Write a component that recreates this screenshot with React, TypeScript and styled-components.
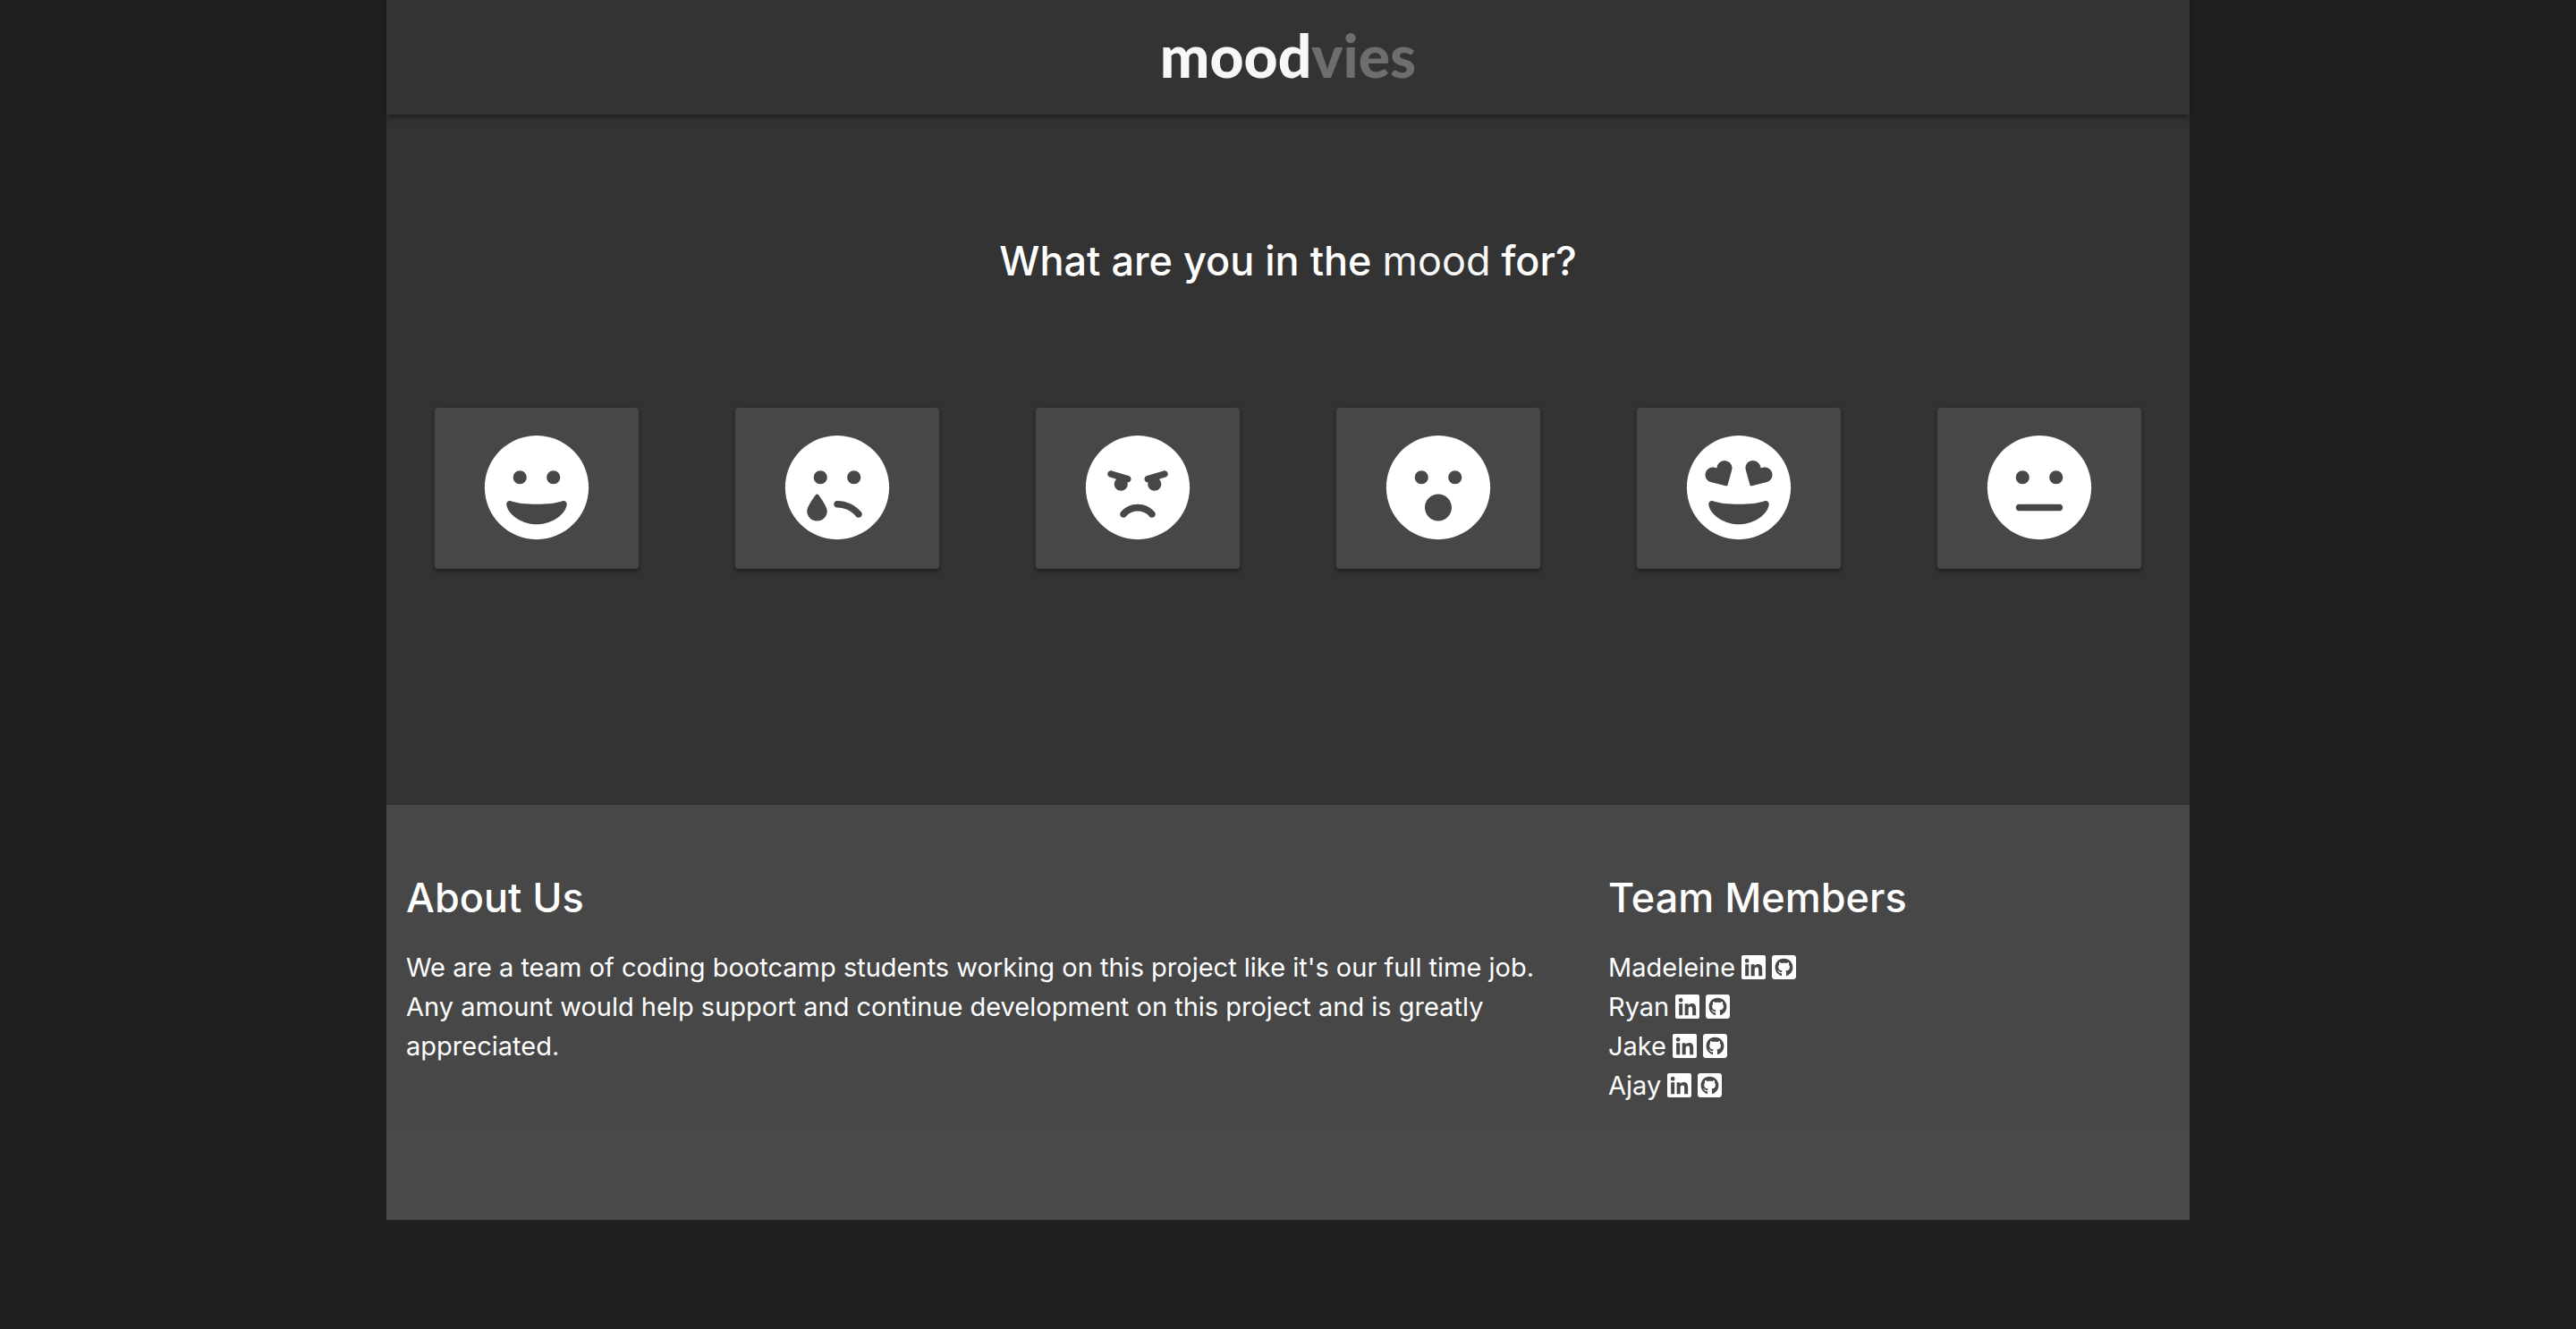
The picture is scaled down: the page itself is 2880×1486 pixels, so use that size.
import React from "react";
import styled, { createGlobalStyle } from "styled-components";
import type { IconType } from "react-icons";
import {
  FaAngry,
  FaGithubSquare,
  FaGrin,
  FaGrinHearts,
  FaLinkedin,
  FaMeh,
  FaSadTear,
  FaSurprise,
} from "react-icons/fa";

const GlobalStyle = createGlobalStyle`
  * { box-sizing: border-box; }
  body {
    margin: 0;
    background: #202020;
    color: #fff;
    font-family: Inter, "Liberation Sans", sans-serif;
    font-size: 29px;
    line-height: 44px;
  }
`;

const Page = styled.div`
  width: 70%;
  margin: 0 auto;
  background: #333;
`;

const Header = styled.header`
  display: flex;
  justify-content: center;
  height: 128px;
  box-shadow: 0 4px 4px rgba(0, 0, 0, 0.14), 0 6px 2px -4px rgba(0, 0, 0, 0.12),
    0 2px 10px rgba(0, 0, 0, 0.2);
`;

const Logo = styled.a`
  color: #f7f7f7;
  font-family: Lato, "Open Sans", sans-serif;
  font-size: 66px;
  font-weight: 900;
  line-height: 124px;
  text-decoration: none;
`;

const LogoTail = styled.span`
  color: #6e6e6e;
`;

const Main = styled.main`
  display: flex;
  flex-direction: column;
  gap: 134px;
  padding: 134px 0 264px;
`;

const Question = styled.h1`
  margin: 0;
  font-size: 45px;
  font-weight: 500;
  line-height: 60px;
  text-align: center;
`;

const Mood = styled.span`
  color: #f7f7f7;
  font-weight: 400;
`;

const MoodGrid = styled.div`
  display: grid;
  grid-template-columns: repeat(6, 1fr);
`;

const MoodButton = styled.button`
  display: flex;
  align-items: center;
  justify-content: center;
  height: 180px;
  margin: 0 54px;
  padding: 0 0 2px;
  border: 0;
  border-radius: 4px;
  background: #474747;
  color: #fff;
  font-size: 120px;
  cursor: pointer;
  box-shadow: 0 4px 4px rgba(0, 0, 0, 0.14), 0 6px 2px -4px rgba(0, 0, 0, 0.12),
    0 2px 10px rgba(0, 0, 0, 0.2);
`;

const Footer = styled.footer`
  background: #474747;
`;

const FooterColumns = styled.div`
  display: grid;
  grid-template-columns: 2fr 1fr;
  padding: 74px 0 28px;
`;

const FooterSection = styled.section`
  padding: 0 22px;
`;

const FooterTitle = styled.h2`
  margin: 0 0 26px;
  font-size: 45px;
  font-weight: 500;
  line-height: 60px;
`;

const FooterText = styled.p`
  margin: 0;
`;

const MemberList = styled.ul`
  margin: 0;
  padding: 0;
  list-style: none;
`;

const Member = styled.li`
  display: flex;
  align-items: center;
  gap: 7px;
`;

const SocialLink = styled.a`
  display: flex;
  width: 27px;
  justify-content: center;
  padding-bottom: 2px;
  color: #fff;
  font-size: 31px;
`;

const FooterBase = styled.div`
  height: 100px;
  background: #4a4a4a;
`;

const moods: { label: string; Icon: IconType }[] = [
  { label: "Happy", Icon: FaGrin },
  { label: "Sad", Icon: FaSadTear },
  { label: "Angry", Icon: FaAngry },
  { label: "Surprised", Icon: FaSurprise },
  { label: "In love", Icon: FaGrinHearts },
  { label: "Neutral", Icon: FaMeh },
];

const members = ["Madeleine", "Ryan", "Jake", "Ajay"];

export default function App() {
  return (
    <>
      <GlobalStyle />
      <Page>
        <Header>
          <Logo href="#">
            mood<LogoTail>vies</LogoTail>
          </Logo>
        </Header>
        <Main>
          <Question>
            What are you in the <Mood>mood</Mood> for?
          </Question>
          <MoodGrid>
            {moods.map(({ label, Icon }) => (
              <MoodButton key={label} type="button" aria-label={label}>
                <Icon />
              </MoodButton>
            ))}
          </MoodGrid>
        </Main>
        <Footer>
          <FooterColumns>
            <FooterSection>
              <FooterTitle>About Us</FooterTitle>
              <FooterText>
                We are a team of coding bootcamp students working on this
                project like it's our full time job. Any amount would help
                support and continue development on this project and is greatly
                appreciated.
              </FooterText>
            </FooterSection>
            <FooterSection>
              <FooterTitle>Team Members</FooterTitle>
              <MemberList>
                {members.map((name) => (
                  <Member key={name}>
                    {name}
                    <SocialLink href="#" aria-label={`${name} on LinkedIn`}>
                      <FaLinkedin />
                    </SocialLink>
                    <SocialLink href="#" aria-label={`${name} on GitHub`}>
                      <FaGithubSquare />
                    </SocialLink>
                  </Member>
                ))}
              </MemberList>
            </FooterSection>
          </FooterColumns>
          <FooterBase />
        </Footer>
      </Page>
    </>
  );
}
